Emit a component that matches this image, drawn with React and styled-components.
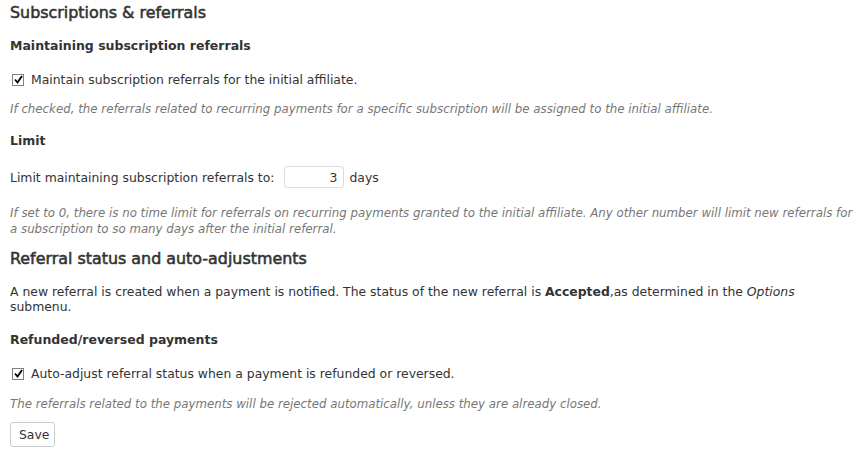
import React from "react";
import styled, { createGlobalStyle } from "styled-components";

const Global = createGlobalStyle`
  html, body {
    margin: 0;
    padding: 0;
    background: #fff;
  }
  body {
    font-family: "DejaVu Sans", "Liberation Sans", sans-serif;
    font-size: 12.4px;
    color: #333;
  }
`;

const Page = styled.div`
  padding: 3px 0 0 10px;
`;

const Title = styled.h2`
  margin: 0 0 ${(p) => p.$after ?? 15}px 0;
  font-size: 15.9px;
  font-weight: normal;
  -webkit-text-stroke: 0.55px #333;
  line-height: 19px;
  color: #333;
`;

const Subtitle = styled.h4`
  margin: 0 0 ${(p) => p.$after ?? 17}px 0;
  font-size: 12.5px;
  font-weight: bold;
  line-height: 17px;
  color: #333;
`;

const Row = styled.label`
  display: flex;
  align-items: center;
  gap: ${(p) => p.$gap ?? 7}px;
  margin: 0 0 ${(p) => p.$after ?? 13}px 0;
  line-height: 17px;
`;

const Box = styled.span`
  display: inline-flex;
  align-items: center;
  justify-content: center;
  width: 10px;
  height: 10px;
  border: 1px solid #8a7f77;
  background: #fff;
  margin-left: 2px;
`;

const Description = styled.p`
  margin: 0 -10px ${(p) => p.$after ?? 16}px 0;
  font-size: 11.8px;
  font-style: italic;
  color: #777;
  line-height: 16px;
`;

const Text = styled.p`
  margin: 0 0 17px 0;
  line-height: 15px;
`;

const NumberField = styled.input`
  width: 60px;
  height: 22px;
  box-sizing: border-box;
  border: 1px solid #ddd;
  border-radius: 3px;
  padding: 0 6px;
  text-align: right;
  font: inherit;
  color: #333;
  margin: 0 5px 0 10px;
  outline: none;
`;

const Button = styled.button`
  font: inherit;
  color: #333;
  background: #fff;
  border: 1px solid #ccc;
  border-radius: 3px;
  padding: 0 8px;
  height: 25px;
  width: 45px;
`;

function Check() {
  return (
    <Box>
      <svg width="9" height="9" viewBox="0 0 9 9">
        <path d="M1 4.5 L3.5 7.5 L8 1" fill="none" stroke="#000" strokeWidth="1.8" />
      </svg>
    </Box>
  );
}

export default function App() {
  return (
    <Page>
      <Global />
      <Title>Subscriptions &amp; referrals</Title>
      <Subtitle>Maintaining subscription referrals</Subtitle>
      <Row>
        <Check />
        Maintain subscription referrals for the initial affiliate.
      </Row>
      <Description $after={15}>
        If checked, the referrals related to recurring payments for a specific subscription will be assigned to the initial affiliate.
      </Description>
      <Subtitle $after={17}>Limit</Subtitle>
      <Row $gap={0} $after={17}>
        Limit maintaining subscription referrals to:
        <NumberField defaultValue="3" />
        days
      </Row>
      <Description $after={12}>
        If set to 0, there is no time limit for referrals on recurring payments granted to the initial affiliate. Any other number will limit new referrals for a subscription to so many days after the initial referral.
      </Description>
      <Title $after={16}>Referral status and auto-adjustments</Title>
      <Text>
        A new referral is created when a payment is notified. The status of the new referral is <b>Accepted</b>,as determined in the <i>Options</i> submenu.
      </Text>
      <Subtitle>Refunded/reversed payments</Subtitle>
      <Row $after={14}>
        <Check />
        Auto-adjust referral status when a payment is refunded or reversed.
      </Row>
      <Description $after={10}>
        The referrals related to the payments will be rejected automatically, unless they are already closed.
      </Description>
      <Button>Save</Button>
    </Page>
  );
}
